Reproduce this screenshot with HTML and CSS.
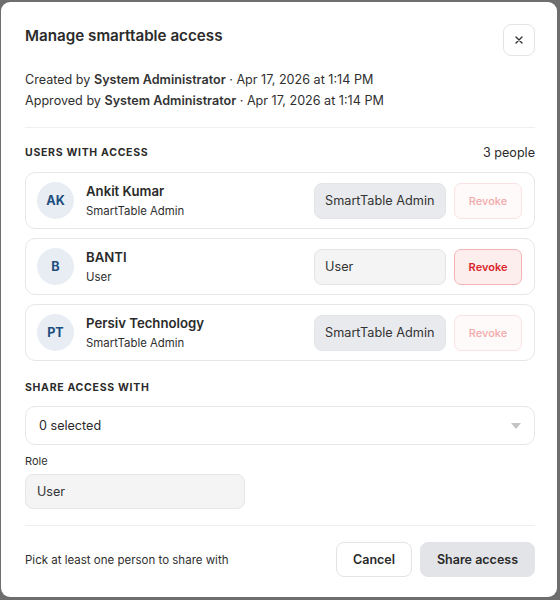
FILE: index.html
```html
<!DOCTYPE html>
<html lang="en">
<head>
<meta charset="utf-8">
<title>Manage smarttable access</title>
<link rel="stylesheet" href="styles.css">
</head>
<body>
<div class="backdrop">
  <div class="modal">
    <header class="modal-head">
      <h1 class="modal-title">Manage smarttable access</h1>
      <button class="close-btn" aria-label="Close">
        <svg width="10" height="10" viewBox="0 0 10 10"><path d="M2 2 L8 8 M8 2 L2 8" stroke="#333" stroke-width="1.4" stroke-linecap="round"/></svg>
      </button>
    </header>

    <div class="meta">
      <p>Created by <b>System Administrator</b> · Apr 17, 2026 at 1:14 PM</p>
      <p>Approved by <b>System Administrator</b> · Apr 17, 2026 at 1:14 PM</p>
    </div>

    <hr class="divider">

    <div class="section-head">
      <span class="section-label">USERS WITH ACCESS</span>
      <span class="count">3 people</span>
    </div>

    <ul class="user-list">
      <li class="user-card">
        <span class="avatar">AK</span>
        <div class="user-info">
          <span class="user-name">Ankit Kumar</span>
          <span class="user-role">SmartTable Admin</span>
        </div>
        <span class="role-select locked">SmartTable Admin</span>
        <button class="revoke" disabled>Revoke</button>
      </li>
      <li class="user-card">
        <span class="avatar">B</span>
        <div class="user-info">
          <span class="user-name">BANTI</span>
          <span class="user-role">User</span>
        </div>
        <span class="role-select">User</span>
        <button class="revoke active">Revoke</button>
      </li>
      <li class="user-card">
        <span class="avatar">PT</span>
        <div class="user-info">
          <span class="user-name">Persiv Technology</span>
          <span class="user-role">SmartTable Admin</span>
        </div>
        <span class="role-select locked">SmartTable Admin</span>
        <button class="revoke" disabled>Revoke</button>
      </li>
    </ul>

    <div class="section-label share-label">SHARE ACCESS WITH</div>

    <div class="multi-select">
      <span>0 selected</span>
      <svg class="caret" width="10" height="6" viewBox="0 0 10 6"><path d="M0 0 H10 L5 6 Z" fill="#c4c4c4"/></svg>
    </div>

    <label class="field-label">Role</label>
    <div class="role-input">User</div>

    <hr class="divider footer-divider">

    <footer class="modal-foot">
      <span class="hint">Pick at least one person to share with</span>
      <div class="actions">
        <button class="btn btn-cancel">Cancel</button>
        <button class="btn btn-share">Share access</button>
      </div>
    </footer>
  </div>
</div>
</body>
</html>
```

FILE: styles.css
```css
* { box-sizing: border-box; }

html, body {
  margin: 0;
  padding: 0;
  height: 100%;
}

body {
  font-family: Inter, "Noto Sans", sans-serif;
  color: #2a2a2a;
  background: #6e6e6e;
}

.backdrop {
  padding: 2px 3px 3px 1px;
  height: 600px;
}

.modal {
  background: #fff;
  border-radius: 9px;
  height: 100%;
  padding: 22px 22px 0 24px;
}

.modal-head {
  display: flex;
  justify-content: space-between;
  align-items: flex-start;
}

.modal-title {
  margin: 2px 0 0;
  font-size: 15.2px;
  font-weight: 600;
  color: #2b2b2b;
}

.close-btn {
  width: 32px;
  height: 32px;
  border: 1px solid #e4e4e4;
  border-radius: 8px;
  background: #fff;
  display: flex;
  align-items: center;
  justify-content: center;
  padding: 0;
}

.meta {
  margin-top: 13px;
  font-size: 12.6px;
  line-height: 21px;
  color: #2f2f2f;
}

.meta p { margin: 0; }
.meta b { font-weight: 600; color: #333; }

.divider {
  border: 0;
  border-top: 1px solid #efefef;
  margin: 16px 0 0;
}

.section-head {
  display: flex;
  justify-content: space-between;
  align-items: center;
  margin-top: 17px;
}

.section-label {
  font-size: 10.5px;
  font-weight: 700;
  letter-spacing: 0.7px;
  color: #2a2a2a;
}

.count {
  font-size: 12.6px;
  color: #2a2a2a;
}

.user-list {
  list-style: none;
  margin: 12px 0 0;
  padding: 0;
  display: flex;
  flex-direction: column;
  gap: 9px;
}

.user-card {
  display: flex;
  align-items: center;
  height: 57px;
  border: 1px solid #e6e6e6;
  border-radius: 10px;
  padding: 0 12px 0 11px;
}

.avatar {
  width: 37px;
  height: 37px;
  border-radius: 50%;
  background: #e8edf4;
  color: #1d4e7e;
  font-size: 12.6px;
  font-weight: 700;
  display: flex;
  align-items: center;
  justify-content: center;
  flex: none;
}

.user-info {
  display: flex;
  flex-direction: column;
  margin-left: 12px;
  flex: 1;
}

.user-name {
  font-size: 13.2px;
  font-weight: 600;
  color: #2a2a2a;
  line-height: 18px;
}

.user-role {
  font-size: 11.4px;
  color: #2f2f2f;
  line-height: 16px;
  margin-top: 3px;
}

.role-select {
  width: 132px;
  height: 36px;
  border-radius: 8px;
  border: 1px solid #e4e4e4;
  background: #f4f4f4;
  font-size: 12.7px;
  color: #333;
  display: flex;
  align-items: center;
  padding: 0 10px;
  flex: none;
}

.role-select.locked {
  background: #e8eaed;
  border-color: #e3e5e8;
}

.revoke {
  width: 68px;
  height: 36px;
  margin-left: 8px;
  border-radius: 7px;
  border: 1px solid #fbe3e3;
  background: #fefafa;
  color: #f2a9a9;
  font-family: inherit;
  font-size: 11px;
  font-weight: 500;
  flex: none;
  padding: 0;
}

.revoke.active {
  background: #fdeeee;
  border-color: #f4b4b4;
  color: #d9252a;
  font-weight: 600;
}

.share-label {
  margin-top: 20px;
}

.multi-select {
  margin-top: 12px;
  height: 39px;
  border: 1px solid #e6e6e6;
  border-radius: 10px;
  display: flex;
  align-items: center;
  justify-content: space-between;
  padding: 0 13px;
  font-size: 12.6px;
  color: #2a2a2a;
}

.caret { margin-top: 1px; }

.field-label {
  display: block;
  margin-top: 9px;
  font-size: 11px;
  color: #2f2f2f;
}

.role-input {
  margin-top: 6px;
  width: 220px;
  height: 35px;
  border: 1px solid #e6e6e6;
  border-radius: 8px;
  background: #f4f4f4;
  font-size: 12.6px;
  color: #333;
  display: flex;
  align-items: center;
  padding: 0 11px;
}

.footer-divider {
  margin-top: 16px;
}

.modal-foot {
  display: flex;
  justify-content: space-between;
  align-items: center;
  margin-top: 16px;
}

.hint {
  font-size: 11.5px;
  color: #2f2f2f;
}

.actions {
  display: flex;
  gap: 8px;
}

.btn {
  height: 35px;
  border-radius: 8px;
  font-family: inherit;
  font-size: 12.5px;
  font-weight: 600;
  color: #2a2a2a;
  padding: 0;
}

.btn-cancel {
  width: 76px;
  background: #fff;
  border: 1px solid #e4e4e4;
}

.btn-share {
  width: 115px;
  background: #e3e4e8;
  border: 1px solid #e3e4e8;
}
```
